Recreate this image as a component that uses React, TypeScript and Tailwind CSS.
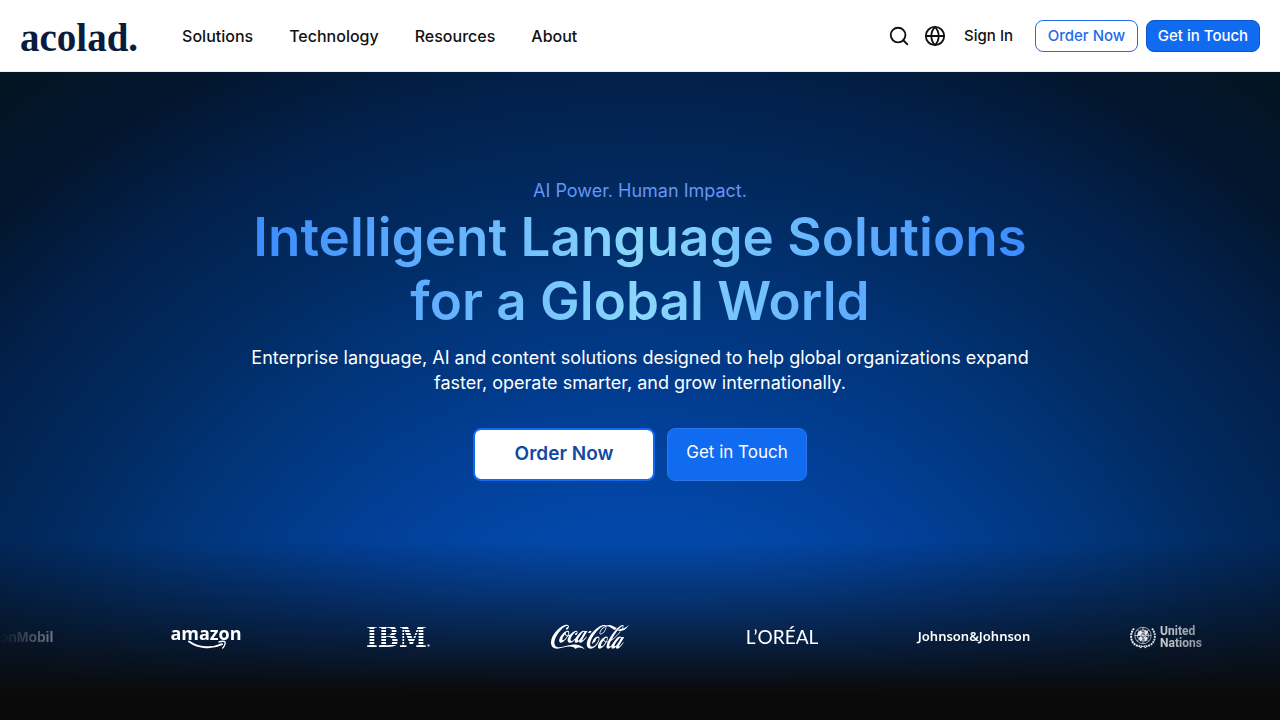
import { Globe, Search } from 'lucide-react';
import { SiCocacola } from 'react-icons/si';

const navItems = ['Solutions', 'Technology', 'Resources', 'About'];

function AmazonLogo() {
  return (
    <div className="flex flex-col items-center">
      <span className="font-['Open_Sans',sans-serif] text-[18px] leading-[18px] font-bold">amazon</span>
      <svg className="-mt-0.5 ml-1 h-[10px] w-[40px]" viewBox="0 0 40 10" fill="none" aria-hidden="true">
        <path d="M1 1.500C11 8.500 24 9 34 4.200" stroke="currentColor" strokeWidth="2" strokeLinecap="round" />
        <path d="M31 2c2.500-1 5.500-1 6 0s-.3 4-2.300 6" stroke="currentColor" strokeWidth="1.400" strokeLinecap="round" />
      </svg>
    </div>
  );
}

function IbmLogo() {
  return (
    <div className="flex items-end">
      <span className="bg-[repeating-linear-gradient(to_bottom,white_0px,white_2px,transparent_2px,transparent_3px)] bg-clip-text pt-0.5 font-['DejaVu_Serif_Condensed','DejaVu_Serif',serif] text-[28px] leading-[30px] font-bold text-transparent">
        IBM
      </span>
      <svg className="mb-1.5 size-[3px]" viewBox="0 0 3 3" aria-hidden="true">
        <circle cx="1.500" cy="1.500" r="1.200" fill="currentColor" opacity="0.7" />
      </svg>
    </div>
  );
}

function UnitedNationsLogo() {
  return (
    <div className="flex items-center gap-1">
      <svg className="h-6 w-[26px]" viewBox="0 0 26 24" fill="none" stroke="currentColor" aria-hidden="true">
        {/* Globe */}
        <g strokeWidth="0.7">
          <circle cx="13" cy="10.500" r="8.200" />
          <circle cx="13" cy="10.500" r="5.600" />
          <circle cx="13" cy="10.500" r="2.900" />
          <path d="M13 2.300v16.400M4.800 10.500h16.400M7.200 4.700l11.600 11.600M18.800 4.700L7.200 16.300" />
        </g>
        <path
          d="M8 7l3-1.500 1.500 2L11 10l-3 .5zM14 5l4 1-.5 3.500-2.500.5zM8.500 12.500l3-1 1 3-2 2zM14 11.500l3.500.5-1 4-2 .5z"
          fill="currentColor"
          stroke="none"
        />
        {/* Olive branches */}
        <g strokeWidth="1.900" strokeDasharray="2 .7">
          <path d="M4 3.500C.2 8-.2 15.500 5 19.500c2 1.500 4.500 1.800 7 1.700" />
          <path d="M22 3.500c3.800 4.500 4.200 12-1 16-2 1.500-4.500 1.800-7 1.700" />
        </g>
        <path d="M10 23l3-2 3 2" strokeWidth="1" />
      </svg>
      <span className="flex flex-col font-[Roboto,sans-serif] text-[12px] leading-[12px] font-bold">
        <span>United</span>
        <span>Nations</span>
      </span>
    </div>
  );
}

export default function App() {
  return (
    <div className="flex min-h-screen flex-col bg-[#0a0a0a] font-[Inter,sans-serif]">
      <header className="flex h-[72px] items-center border-b border-[#e6eef8] bg-white px-5 text-[#111]">
        <a href="#" className="pt-1 font-['Liberation_Serif',serif] text-[39px] leading-[44px] font-bold text-[#0b1b3d]">
          acolad.
        </a>
        <nav className="ml-11 flex gap-9 text-base font-medium">
          {navItems.map((item) => (
            <a key={item} href="#">
              {item}
            </a>
          ))}
        </nav>

        <div className="ml-auto flex items-center text-[15px] leading-6 font-medium">
          <button type="button" aria-label="Search" className="mr-3.5">
            <Search className="size-[22px]" />
          </button>
          <button type="button" aria-label="Language" className="mr-[18px]">
            <Globe className="size-[22px]" />
          </button>
          <a href="#" className="mr-[22px]">
            Sign In
          </a>
          <button type="button" className="mr-2 h-8 w-[103px] rounded-lg border border-[#1e6bea] text-[#1e6bea]">
            Order Now
          </button>
          <button type="button" className="h-8 w-[114px] rounded-lg border border-[#0b55cc] bg-[#116bf1] text-white">
            Get in Touch
          </button>
        </div>
      </header>

      <main className="relative flex-1 bg-[radial-gradient(755px_640px_at_50%_100%,#034bb0_20%,#0349ab_28%,#02409a_44%,#01357a_66%,#012b62_81%,#02204a_100%,#03162f_115%,#041422_132%)]">
        {/* Fade to the dark page below */}
        <div className="absolute inset-x-0 bottom-0 h-[180px] bg-[linear-gradient(to_bottom,transparent,#0a0a0a_85%)]" />

        <section className="relative flex flex-col items-center px-5 pt-[106px] text-center">
          <p className="text-lg leading-[25px] text-[#6496f5]">AI Power. Human Impact.</p>
          <h1 className="mt-0.5 bg-[linear-gradient(to_right,#3b8bff,#8bd8fb,#3b8bff)] bg-clip-text text-[53px] leading-[64px] font-semibold text-transparent">
            Intelligent Language Solutions
            <br />
            for a Global World
          </h1>
          <p className="mt-3 max-w-[800px] text-lg leading-[25px] text-white">
            Enterprise language, AI and content solutions designed to help global organizations expand faster, operate
            smarter, and grow internationally.
          </p>
          <div className="mt-[33px] flex gap-3">
            <button type="button" className="h-[53px] w-[182px] rounded-lg border-2 border-[#116bf1] bg-white text-[19px] font-semibold text-[#0f4aa6]">
              Order Now
            </button>
            <button type="button" className="h-[53px] w-[140px] rounded-lg border border-[#2a76ea] bg-[#116bf1] pb-1 text-[17px] text-white">
              Get in Touch
            </button>
          </div>
        </section>

        <div className="relative mt-[130px] overflow-hidden pb-[57px] [mask-image:linear-gradient(to_right,transparent,black_10%,black_88%,transparent)]">
          <ul className="-ml-[82px] flex h-[52px] w-max items-center text-white *:flex *:w-48 *:justify-center">
            <li>
              <span className="font-['Liberation_Sans',sans-serif] text-[14px] font-bold">ExxonMobil</span>
            </li>
            <li>
              <AmazonLogo />
            </li>
            <li>
              <IbmLogo />
            </li>
            <li>
              <SiCocacola viewBox="0 8 24 8" className="h-[26px] w-[78px]" title="Coca-Cola" />
            </li>
            <li>
              <span className="font-[Lato,sans-serif] text-[19px]">L’ORÉAL</span>
            </li>
            <li>
              <span className="font-['Noto_Sans',sans-serif] text-[13px] font-semibold">Johnson&amp;Johnson</span>
            </li>
            <li>
              <UnitedNationsLogo />
            </li>
          </ul>
        </div>
      </main>
    </div>
  );
}
